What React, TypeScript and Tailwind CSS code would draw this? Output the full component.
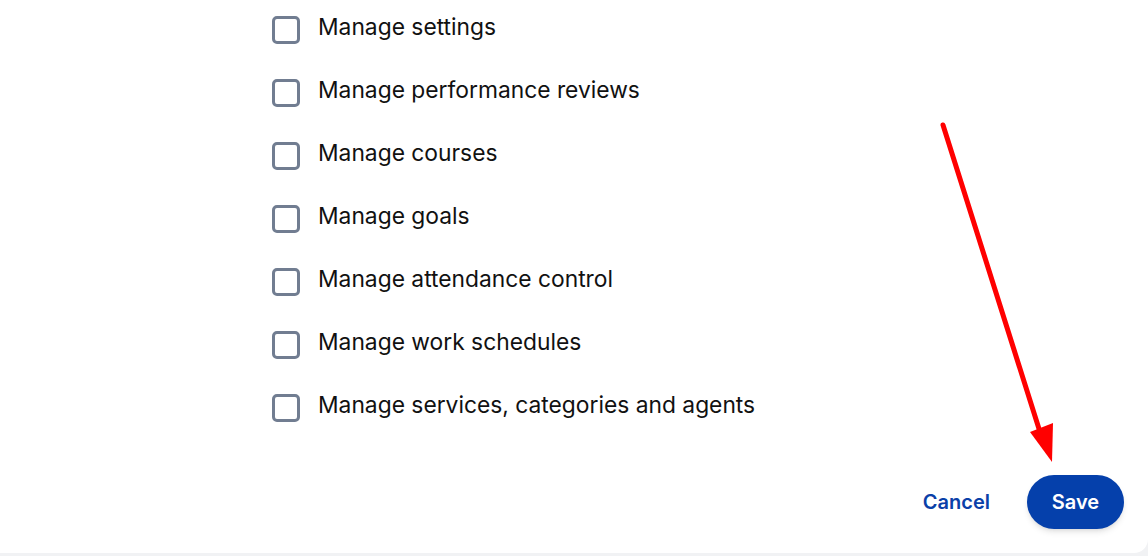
const permissions = [
  'Manage settings',
  'Manage performance reviews',
  'Manage courses',
  'Manage goals',
  'Manage attendance control',
  'Manage work schedules',
  'Manage services, categories and agents',
];

export default function App() {
  return (
    <div className="min-h-[556px] bg-[#f1f2f4] font-['Inter',sans-serif]">
      <div className="relative h-[553px] bg-white rounded-br-[14px] flex flex-col">
        {/* permission list */}
        <div className="pl-[272px] pt-[16px] flex flex-col gap-[35px]">
          {permissions.map(p => (
            <label key={p} className="flex items-center gap-[18px] h-[28px]">
              <span className="w-[28px] h-[28px] rounded-[5px] border-[3px] border-[#717d91] bg-white shrink-0" />
              <span className="text-[22.8px] text-[#111] leading-none mb-[6px]">{p}</span>
            </label>
          ))}
        </div>

        {/* footer */}
        <div className="mt-auto flex items-center justify-end gap-[37px] pr-[24px] pb-[24px]">
          <button className="text-[20px] font-semibold text-[#0a40a8]">Cancel</button>
          <button className="h-[54px] w-[97px] rounded-full bg-[#0540ab] text-white text-[20px] font-semibold shadow-md">
            Save
          </button>
        </div>

        {/* annotation arrow */}
        <svg className="absolute left-0 top-0 pointer-events-none" width="1148" height="556">
          <line x1="943" y1="125" x2="1040" y2="432" stroke="#ff0000" strokeWidth="5" strokeLinecap="round" />
          <polygon points="1030,432 1053,423 1052,462" fill="#ff0000" />
        </svg>
      </div>
    </div>
  );
}
